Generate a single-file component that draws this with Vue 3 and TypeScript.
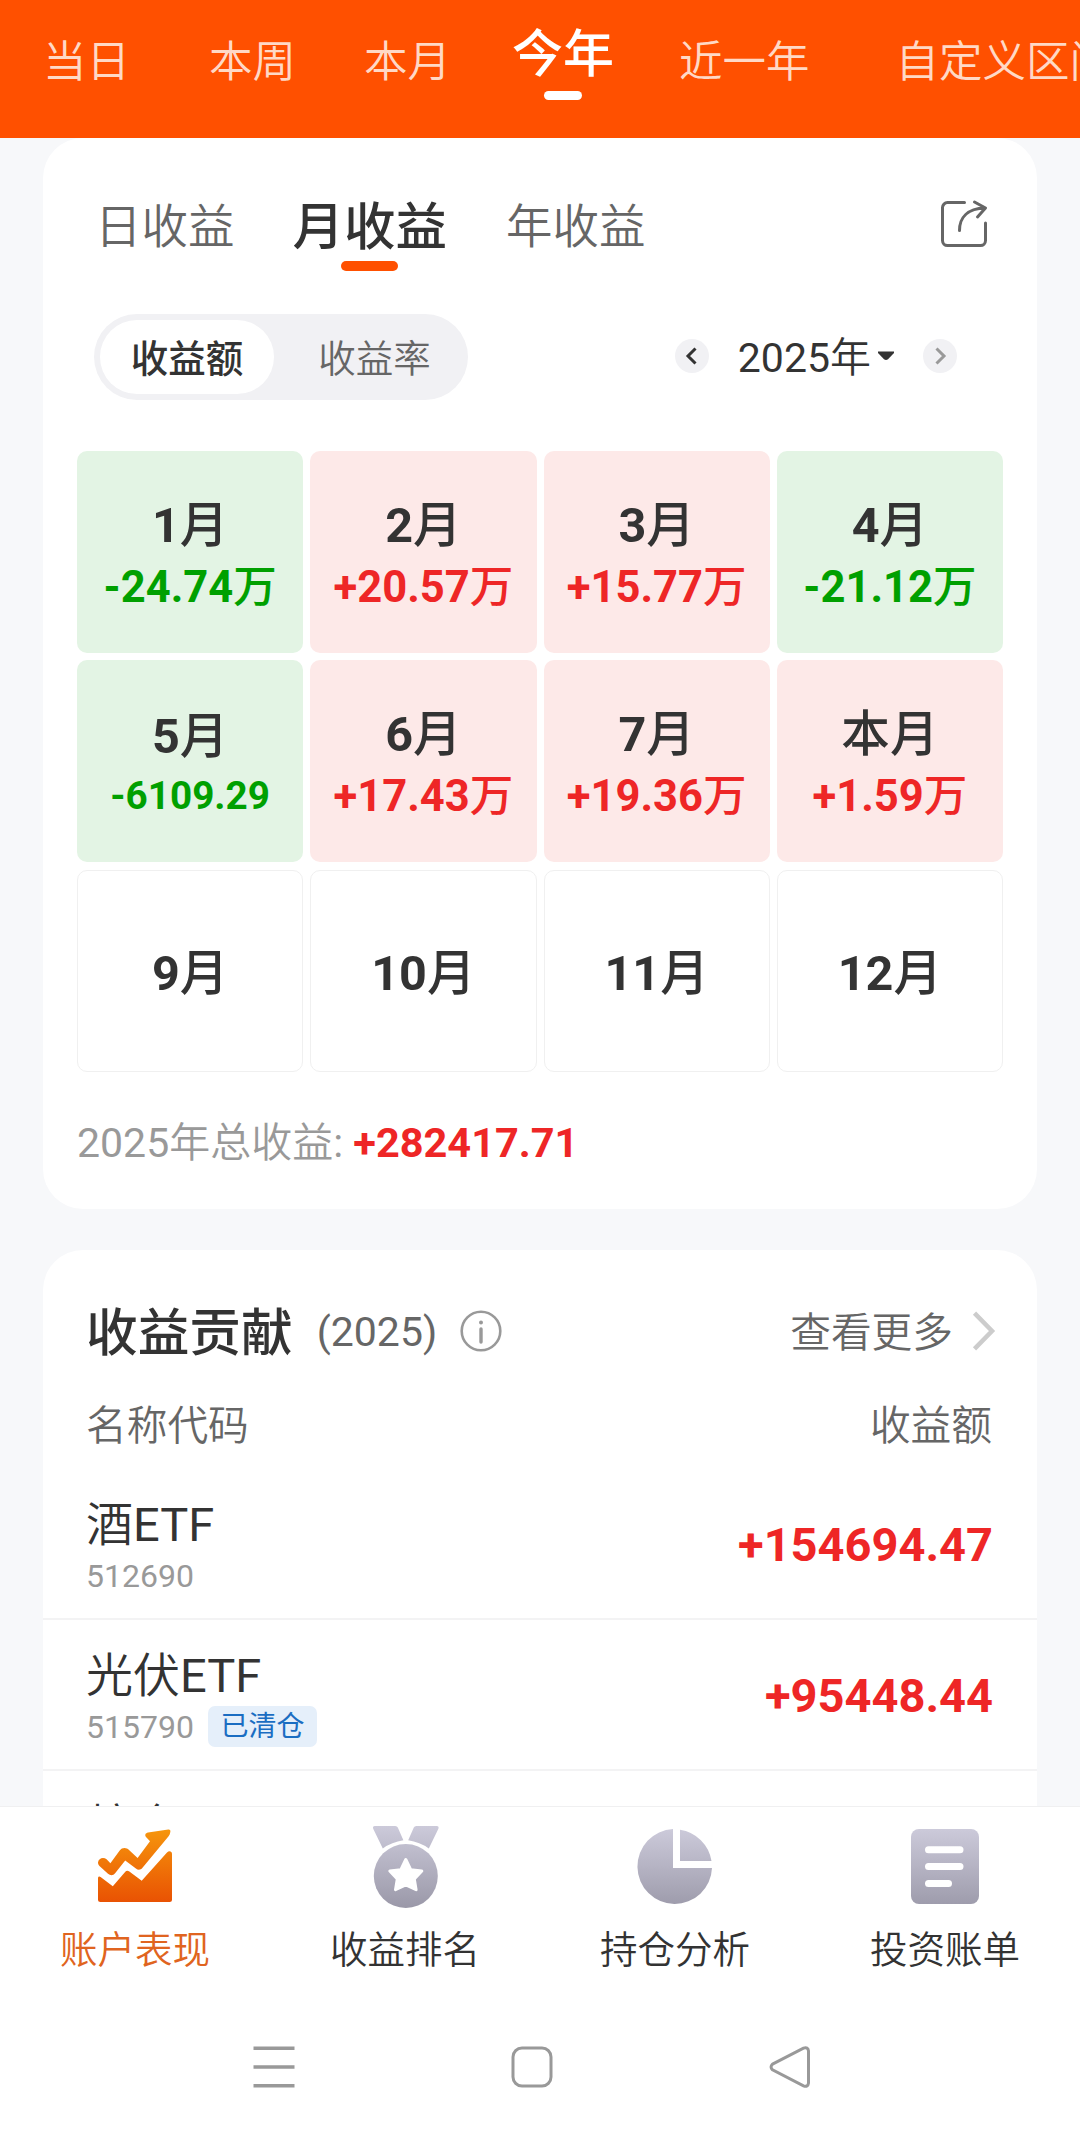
<script setup lang="ts">
interface MonthCell { num: string; value?: string; unit?: string; tone: 'up' | 'down' | 'none' }
interface Holding { name: string; latin: string; code: string; cleared: boolean; amount: string }

const ranges: string[] = ['当日', '本周', '本月', '今年', '近一年', '自定义区间']
const activeRange = '今年'

const months: MonthCell[] = [
  { num: '1', value: '-24.74', unit: '万', tone: 'down' },
  { num: '2', value: '+20.57', unit: '万', tone: 'up' },
  { num: '3', value: '+15.77', unit: '万', tone: 'up' },
  { num: '4', value: '-21.12', unit: '万', tone: 'down' },
  { num: '5', value: '-6109.29', tone: 'down' },
  { num: '6', value: '+17.43', unit: '万', tone: 'up' },
  { num: '7', value: '+19.36', unit: '万', tone: 'up' },
  { num: '本', value: '+1.59', unit: '万', tone: 'up' },
  { num: '9', tone: 'none' },
  { num: '10', tone: 'none' },
  { num: '11', tone: 'none' },
  { num: '12', tone: 'none' },
]

const holdings: Holding[] = [
  { name: '酒', latin: 'ETF', code: '512690', cleared: false, amount: '+154694.47' },
  { name: '光伏', latin: 'ETF', code: '515790', cleared: true, amount: '+95448.44' },
  { name: '粮食', latin: '', code: '', cleared: false, amount: '' },
]
</script>

<template>
  <div class="screen">
    <header class="ranges">
      <span v-for="r in ranges" :key="r" class="range" :class="{ on: r === activeRange }">{{ r }}</span>
    </header>

    <main class="content">
      <section class="card calendar">
        <div class="tabs">
          <span class="tab">日收益</span>
          <span class="tab on">月收益</span>
          <span class="tab">年收益</span>
          <svg class="share" width="48" height="48" viewBox="0 0 48 48" fill="none" stroke="#666" stroke-width="3" stroke-linecap="round" stroke-linejoin="round">
            <path d="M24.5 2.6H7.5a5 5 0 0 0-5 5v33a5 5 0 0 0 5 5h33a5 5 0 0 0 5-5V23" />
            <path d="M19.5 30.5C19.5 18 27 8.500 45 8M34.500 2L45.500 8L37.500 17" />
          </svg>
        </div>

        <div class="controls">
          <div class="segment">
            <span class="seg on">收益额</span>
            <span class="seg">收益率</span>
          </div>
          <div class="year">
            <svg width="34" height="34" viewBox="0 0 34 34"><circle cx="17" cy="17" r="17" fill="#f1f1f4" /><path d="M20.500 9.500L13 17L20.500 24.500" fill="none" stroke="#333" stroke-width="3" /></svg>
            <span class="year-text">2025<span class="cjk">年</span></span>
            <svg class="caret" width="18" height="10" viewBox="0 0 18 10"><path d="M1 .5H17V2L11 8.300Q9 9.800 7 8.300L1 2Z" fill="#333" /></svg>
            <svg width="34" height="34" viewBox="0 0 34 34"><circle cx="17" cy="17" r="17" fill="#f1f1f4" /><path d="M13.500 9.500L21 17L13.500 24.500" fill="none" stroke="#999" stroke-width="3" /></svg>
          </div>
        </div>

        <div class="grid">
          <div v-for="m in months" :key="m.num" class="cell" :class="[m.tone, { small: m.value && !m.unit }]">
            <span class="month"><span :class="{ cjk: m.num === '本' }">{{ m.num }}</span><span class="cjk">月</span></span>
            <span v-if="m.value" class="value">{{ m.value }}<span v-if="m.unit" class="cjk">{{ m.unit }}</span></span>
          </div>
        </div>

        <div class="total">2025<span class="cjk">年总收益</span>: <b>+282417.71</b></div>
      </section>

      <section class="card contrib">
        <div class="title-row">
          <span class="title">收益贡献</span>
          <span class="title-year">(2025)</span>
          <svg class="info" width="42" height="42" viewBox="0 0 42 42" fill="none" stroke="#999"><circle cx="21" cy="21" r="19.300" stroke-width="2.600" /><path d="M21 19V32" stroke-width="3.400" stroke-linecap="round" /><circle cx="21" cy="12.500" r="2" fill="#999" stroke="none" /></svg>
          <span class="more">查看更多</span>
          <svg class="chevron" width="24" height="40" viewBox="0 0 24 40" fill="none" stroke="#ccc" stroke-width="4.500"><path d="M2.500 2.200L20 20L2.500 37.800" /></svg>
        </div>
        <div class="head-row"><span>名称代码</span><span>收益额</span></div>
        <div v-for="h in holdings" :key="h.name" class="holding">
          <div>
            <div class="name"><span class="cjk">{{ h.name }}</span>{{ h.latin }}</div>
            <div class="code">{{ h.code }}<span v-if="h.cleared" class="badge">已清仓</span></div>
          </div>
          <div class="amount">{{ h.amount }}</div>
        </div>
      </section>
    </main>

    <nav class="tabbar">
      <div class="item on">
        <svg width="74" height="82" viewBox="0 -3 74 82">
          <defs><linearGradient id="warm" gradientUnits="userSpaceOnUse" x1="0" y1="0" x2="0" y2="73"><stop offset="0" stop-color="#f6960c" /><stop offset="1" stop-color="#e95203" /></linearGradient></defs>
          <path fill="url(#warm)" d="M0 33.500C.5 29 5.500 27.800 8.600 30.300L12.400 34.300L21.700 21.500C24 18.300 28.500 18.300 31 21L39.600 29L52 12.300L48 8C46.500 6 47.500 4 50 3.500L70.300.4C72 .2 72.800 1.500 72.300 3C72 5 71.500 6 70.600 7.200L44.500 38.700C42.500 41.200 40 41.200 37.900 39.500L27.200 31.500L17.300 44C15 46.800 12.500 46.800 10 44.800L2 37.500C.5 36 0 35 0 33.500Z" />
          <path fill="url(#warm)" d="M0 49C0 47.500 1.500 47 2.600 48L14.800 57.200L27.300 42.800C28.300 41.600 29.700 41.400 31 42.300L43.700 51.800L69 23.500C71 21.300 74 22 74 25V70.500Q74 73 71.500 73H2.500Q0 73 0 70.500Z" />
        </svg>
        <span>账户表现</span>
      </div>
      <div class="item">
        <svg width="66" height="82" viewBox="-.8 0 66 82">
          <defs><linearGradient id="cool" gradientUnits="userSpaceOnUse" x1="0" y1="0" x2="0" y2="82"><stop offset="0" stop-color="#cccada" /><stop offset="1" stop-color="#9a98a8" /></linearGradient></defs>
          <path fill="url(#cool)" d="M2 0H22.500Q24.300 0 25 1.600L30.600 14.300Q19 16 10 22.500L.4 2.800Q-.4 0 2 0ZM64 0H43.500Q41.700 0 41 1.600L35.400 14.300Q47 16 56 22.500L65.600 2.800Q66.400 0 64 0Z" />
          <circle cx="33" cy="50" r="32" fill="url(#cool)" />
          <path fill="#fff" stroke="#fff" stroke-width="3" stroke-linejoin="round" d="M33 33.500L37.900 43.700L49 45L41.500 53L43.300 63.700L33 59L22.700 63.700L24.500 53L17 45L28.100 43.700Z" />
        </svg>
        <span>收益排名</span>
      </div>
      <div class="item">
        <svg width="74" height="82" viewBox="0 -3 74 82">
          <path fill="url(#cool)" d="M35 0A37.300 37.500 0 1 0 74 39H35ZM42 .8A37.500 37.500 0 0 1 73.500 32H42Z" />
        </svg>
        <span>持仓分析</span>
      </div>
      <div class="item">
        <svg width="68" height="82" viewBox="0 -3 68 82">
          <rect width="68" height="75" rx="8" fill="url(#cool)" />
          <path d="M17.500 20.700H49M17.500 37.500H49M17.500 54.500H37.500" stroke="#fff" stroke-width="7" stroke-linecap="round" />
        </svg>
        <span>投资账单</span>
      </div>
    </nav>

    <footer class="system">
      <svg width="42" height="42" viewBox="0 0 42 42" stroke="#999" stroke-width="3.600"><path d="M.5 2.200H41.500M.5 21H41.500M.5 39.800H41.500" /></svg>
      <svg width="42" height="42" viewBox="0 0 42 42" fill="none" stroke="#999" stroke-width="3"><rect x="2" y="2" width="38" height="38" rx="9" /></svg>
      <svg width="42" height="42" viewBox="0 0 42 42" fill="none" stroke="#999" stroke-width="3"><path d="M3.500 18.200L34.500 2.200Q39 .6 39.500 5V37Q39 41.400 34.500 39.800L3.500 23.800Q.6 21 3.500 18.200Z" /></svg>
    </footer>
  </div>
</template>

<style>
body { background: #fff; }
</style>

<style scoped>
.screen {
  width: 1080px;
  height: 2142px;
  overflow: hidden;
  display: flex;
  flex-direction: column;
  background: #fff;
  color: #333;
  font-family: Roboto, "Noto Sans CJK SC", sans-serif;
  white-space: nowrap;
}
svg { display: block; flex: none; overflow: visible; }
.cjk { font-weight: 350; }

.ranges {
  height: 138px;
  flex: none;
  display: flex;
  overflow: hidden;
  background: #ff5000;
  color: #ffd9c6;
  font-weight: 350;
}
.range { flex: none; font-size: 43.500px; line-height: 125px; margin-left: 67px; }
.range:nth-child(1) { margin-left: 43px; }
.range:nth-child(2) { margin-left: 79px; }
.range:nth-child(3) { margin-left: 68px; }
.range:nth-child(4) { margin-left: 61px; }
.range:nth-child(5) { margin-left: 65px; }
.range:nth-child(6) { margin-left: 86px; }
.range.on {
  font-size: 51px;
  line-height: 109px;
  font-weight: 500;
  color: #fff;
  display: flex;
  flex-direction: column;
  align-items: center;
}
.range.on::after { content: ""; width: 38px; height: 9px; margin-top: -18px; border-radius: 5px; background: #fff; }

.content {
  height: 1668px;
  flex: none;
  overflow: hidden;
  background: #f7f8fa;
  padding: 0 43px;
}
.card { background: #fff; border-radius: 40px; }
.calendar { height: 1070.500px; padding: 0 34px; box-sizing: border-box; display: flex; flex-direction: column; }
.tabs { height: 133px; display: flex; padding: 42px 15px 0 18px; flex: none; box-sizing: border-box; }
.tab { font-size: 46.500px; line-height: 94px; color: #666; font-weight: 350; }
.tab.on {
  margin: 0 59px 0 58px;
  font-size: 51.500px;
  line-height: 95px;
  color: #333;
  font-weight: 500;
  display: flex;
  flex-direction: column;
  align-items: center;
}
.tab.on::after { content: ""; width: 57px; height: 10px; margin-top: -14px; border-radius: 5px; background: #ff5000; }
.share { margin: 20px 0 0 auto; }

.controls { display: flex; justify-content: space-between; margin: 43px 46px 0 17px; }
.segment { width: 374px; height: 86px; box-sizing: border-box; padding: 6px; border-radius: 43px; background: #f1f1f4; display: flex; }
.seg { width: 174px; height: 74px; line-height: 79px; text-align: center; font-size: 37.500px; color: #666; border-radius: 37px; font-weight: 350; }
.seg:last-child { flex: 1; padding-left: 13px; }
.seg.on { background: #fff; color: #333; font-weight: 500; }
.year { display: flex; align-items: center; height: 84px; }
.year-text { font-size: 41px; line-height: 60px; margin: 4px 6px 0 29px; }
.caret { margin-right: 28px; }

.grid { display: grid; grid-template-columns: repeat(4, 1fr); grid-auto-rows: 202px; gap: 7.300px 7px; margin-top: 51px; }
.cell { border-radius: 10px; display: flex; flex-direction: column; align-items: center; justify-content: center; box-sizing: border-box; padding-top: 9px; }
.cell.up { background: #fde9e8; }
.cell.down { background: #e3f4e4; }
.cell.none { border: 1.500px solid #f0f0f0; padding-top: 6px; }
.month { font-size: 48.500px; line-height: 62px; font-weight: 700; }
.value { font-size: 43.500px; line-height: 62px; font-weight: 700; }
.month .cjk, .value .cjk { font-weight: 500; }
.cell.small { padding-top: 8px; }
.small .value { font-size: 38.700px; line-height: 56px; }
.up .value { color: #ee2626; }
.down .value { color: #00a000; }

.total { font-size: 41px; line-height: 60px; margin-top: 41px; color: #999; }
.total b { color: #ee2626; font-size: 41.500px; }

.contrib { margin-top: 41px; }
.title-row { height: 163px; padding: 0 41px 0 43px; display: flex; align-items: center; }
.title { font-size: 51.700px; font-weight: 500; line-height: 60px; padding-top: 6px; }
.title-year { font-size: 41px; line-height: 60px; color: #666; margin-left: 24px; padding-top: 2px; }
.info { margin-left: 22.500px; }
.more { font-size: 40.700px; line-height: 48px; color: #666; margin-left: auto; margin-right: 19px; font-weight: 350; padding-top: 4px; }
.head-row { height: 56.500px; line-height: 26px; padding: 0 45px 0 43px; display: flex; justify-content: space-between; font-size: 40.700px; color: #666; font-weight: 350; }
.holding { height: 151px; box-sizing: border-box; border-bottom: 2px solid #f3f3f4; display: flex; justify-content: space-between; padding: 25px 44px 0 43px; }
.name { font-size: 47px; line-height: 61px; }
.code { font-size: 32px; line-height: 43px; color: #999; display: flex; align-items: center; }
.badge { margin-left: 14px; width: 109px; height: 41px; line-height: 41px; margin-top: -2px; text-align: center; border-radius: 7px; background: #e5effa; color: #1a6dc2; font-size: 28px; }
.amount { font-size: 47px; line-height: 101px; font-weight: 700; color: #ee2626; }

.tabbar { height: 180px; flex: none; display: flex; border-top: 1px solid #f0f0f1; background: #fff; }
.item { flex: 1; display: flex; flex-direction: column; align-items: center; padding-top: 19px; font-size: 37.500px; line-height: 85px; font-weight: 350; }
.item.on { color: #e06420; }
.system { display: flex; justify-content: center; gap: 216px; padding: 59px 16px 0 0; }
</style>
